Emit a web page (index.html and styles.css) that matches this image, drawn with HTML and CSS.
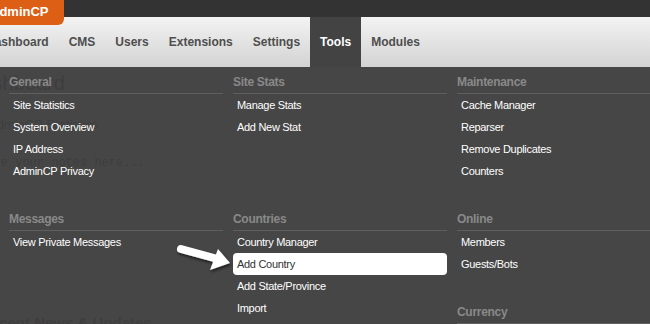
FILE: index.html
```html
<!DOCTYPE html>
<html>
<head>
<meta charset="utf-8">
<link rel="stylesheet" href="styles.css">
</head>
<body>
<div class="topbar">
  <div class="brand">AdminCP</div>
</div>
<nav class="nav">
  <a class="nav-item">Dashboard</a>
  <a class="nav-item">CMS</a>
  <a class="nav-item">Users</a>
  <a class="nav-item">Extensions</a>
  <a class="nav-item">Settings</a>
  <a class="nav-item active">Tools</a>
  <a class="nav-item">Modules</a>
</nav>
<div class="stage">
  <div class="page">
    <h1 class="page-title">Dashboard</h1>
    <div class="page-sub">AdminCP Statistics</div>
    <div class="notes">Leave your notes here...</div>
    <h2 class="page-h2">Recent News &amp; Updates</h2>
  </div>
  <div class="dropdown">
    <div class="grid">
      <section class="group">
        <div class="group-title">General</div>
        <a class="link">Site Statistics</a>
        <a class="link">System Overview</a>
        <a class="link">IP Address</a>
        <a class="link">AdminCP Privacy</a>
      </section>
      <section class="group">
        <div class="group-title">Site Stats</div>
        <a class="link">Manage Stats</a>
        <a class="link">Add New Stat</a>
      </section>
      <section class="group">
        <div class="group-title">Maintenance</div>
        <a class="link">Cache Manager</a>
        <a class="link">Reparser</a>
        <a class="link">Remove Duplicates</a>
        <a class="link">Counters</a>
      </section>
      <section class="group">
        <div class="group-title">Messages</div>
        <a class="link">View Private Messages</a>
      </section>
      <section class="group">
        <div class="group-title">Countries</div>
        <a class="link">Country Manager</a>
        <a class="link hover">Add Country</a>
        <a class="link">Add State/Province</a>
        <a class="link">Import</a>
      </section>
      <div class="stack">
        <section class="group">
          <div class="group-title">Online</div>
          <a class="link">Members</a>
          <a class="link">Guests/Bots</a>
        </section>
        <section class="group">
          <div class="group-title">Currency</div>
          <a class="link">Currency Manager</a>
          <a class="link">Add Currency</a>
        </section>
      </div>
    </div>
  </div>
  <svg class="arrow" width="650" height="260" viewBox="0 67 650 260">
    <defs>
      <filter id="sh" x="-30%" y="-50%" width="160%" height="200%">
        <feDropShadow dx="1" dy="2" stdDeviation="1.5" flood-color="#000" flood-opacity="0.6"/>
      </filter>
    </defs>
    <g filter="url(#sh)" fill="#fff">
      <line x1="181" y1="249" x2="214" y2="258" stroke="#fff" stroke-width="8" stroke-linecap="round"/>
      <polygon points="230,263 218,249 210,270"/>
    </g>
  </svg>
</div>
</body>
</html>
```

FILE: styles.css
```css
* { box-sizing: border-box; }
html, body {
  margin: 0;
  padding: 0;
  overflow: hidden;
}
body {
  width: 650px;
  height: 324px;
  background: #eeeeee;
  font-family: "Liberation Sans", Arial, sans-serif;
  color: #333;
}
.topbar {
  position: relative;
  height: 17px;
  background: #333333;
}
.brand {
  position: absolute;
  left: -25px;
  top: 0;
  z-index: 3;
  height: 25px;
  padding: 0 15px;
  line-height: 23px;
  background: #dc5f15;
  color: #fff;
  font-weight: bold;
  font-size: 13px;
  border-bottom-right-radius: 6px;
}
.nav {
  display: flex;
  height: 50px;
  margin-left: -24px;
  background: linear-gradient(#f3f3f3, #d3d3d3);
}
.nav-item {
  display: block;
  padding: 0 10px;
  line-height: 50px;
  font-size: 12px;
  font-weight: bold;
  color: #4e4e4e;
}
.nav-item.active {
  background: #434343;
  color: #fff;
}
.stage {
  position: relative;
  height: 257px;
}
.page {
  padding-top: 4px;
  color: #444;
}
.page-title {
  margin: 0 0 0 -33px;
  font-size: 20px;
  font-weight: normal;
  line-height: 24px;
}
.page-sub {
  margin: 22px 0 0 -12px;
  font-size: 13px;
}
.notes {
  margin: 24px 0 0 -28px;
  font-family: "Liberation Mono", monospace;
  font-size: 12px;
}
.page-h2 {
  margin: 144px 0 0 -20px;
  font-size: 15px;
}
.dropdown {
  position: absolute;
  top: 0;
  left: 0;
  width: 700px;
  height: 300px;
  padding: 4px 0 0 9px;
  background: rgba(62, 62, 62, 0.955);
}
.grid {
  display: grid;
  grid-template-columns: 214px 214px 214px;
  column-gap: 10px;
  align-items: start;
}
.group {
  display: flex;
  flex-direction: column;
  margin-bottom: 26px;
}
.group-title {
  height: 23px;
  line-height: 22px;
  padding-left: 0;
  border-bottom: 1px solid #5f5f5f;
  color: #898989;
  font-size: 12px;
  font-weight: bold;
  letter-spacing: -0.3px;
}
.link {
  display: block;
  height: 22px;
  line-height: 22px;
  padding-left: 4px;
  color: #fff;
  font-size: 11px;
  letter-spacing: -0.3px;
  border-radius: 4px;
}
.link.hover {
  background: #fff;
  color: #333;
}
.arrow {
  position: absolute;
  left: 0;
  top: 0;
  pointer-events: none;
}
```
